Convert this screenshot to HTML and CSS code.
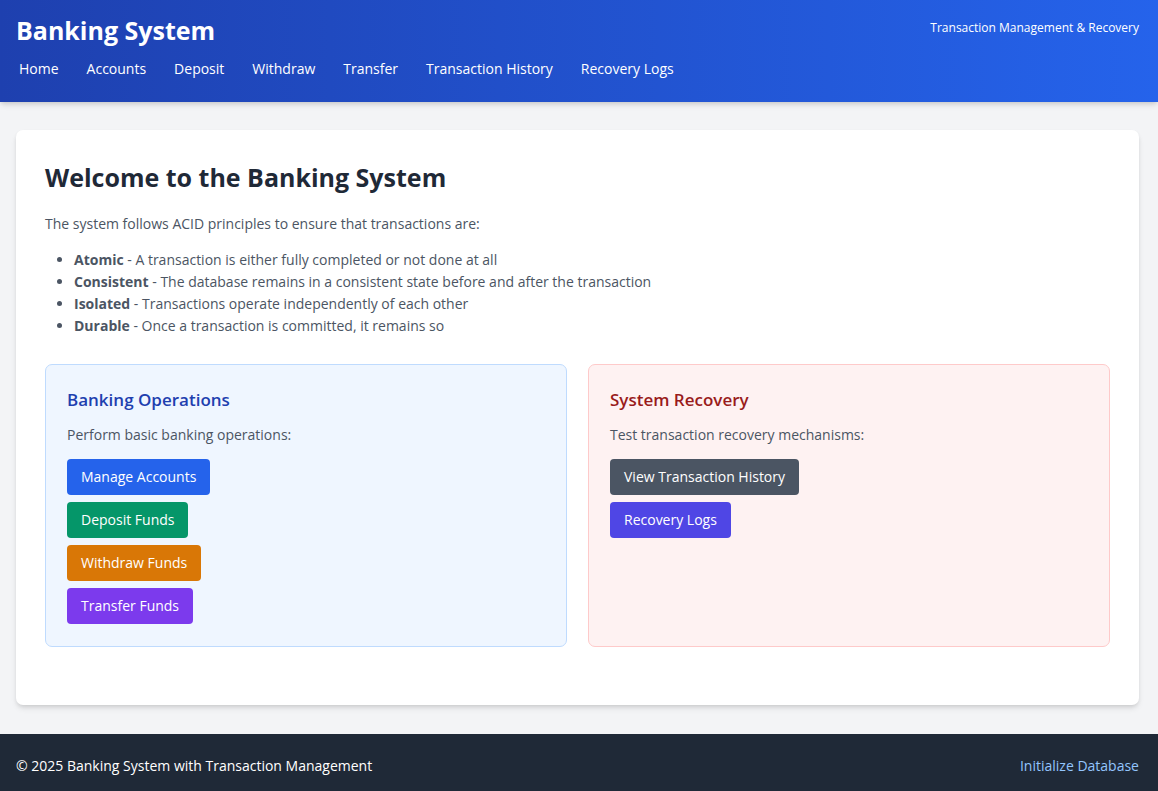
FILE: index.html
```html
<!DOCTYPE html>
<html lang="en">
<head>
<meta charset="utf-8">
<meta name="viewport" content="width=device-width, initial-scale=1">
<title>Banking System</title>
<link rel="stylesheet" href="styles.css">
</head>
<body>
<header class="site-header">
  <div class="brand-row">
    <h1 class="brand">Banking System</h1>
    <p class="tagline">Transaction Management &amp; Recovery</p>
  </div>
  <nav class="nav" aria-label="Main">
    <a href="#">Home</a>
    <a href="#">Accounts</a>
    <a href="#">Deposit</a>
    <a href="#">Withdraw</a>
    <a href="#">Transfer</a>
    <a href="#">Transaction History</a>
    <a href="#">Recovery Logs</a>
  </nav>
</header>
<main class="main">
  <section class="card">
    <h2 class="card-title">Welcome to the Banking System</h2>
    <p class="intro">The system follows ACID principles to ensure that transactions are:</p>
    <ul class="principles">
      <li><strong>Atomic</strong> - A transaction is either fully completed or not done at all</li>
      <li><strong>Consistent</strong> - The database remains in a consistent state before and after the transaction</li>
      <li><strong>Isolated</strong> - Transactions operate independently of each other</li>
      <li><strong>Durable</strong> - Once a transaction is committed, it remains so</li>
    </ul>
    <div class="panels">
      <section class="panel panel-blue">
        <h3 class="panel-title">Banking Operations</h3>
        <p class="panel-text">Perform basic banking operations:</p>
        <div class="actions">
          <a class="btn btn-blue" href="#">Manage Accounts</a>
          <a class="btn btn-green" href="#">Deposit Funds</a>
          <a class="btn btn-amber" href="#">Withdraw Funds</a>
          <a class="btn btn-violet" href="#">Transfer Funds</a>
        </div>
      </section>
      <section class="panel panel-red">
        <h3 class="panel-title">System Recovery</h3>
        <p class="panel-text">Test transaction recovery mechanisms:</p>
        <div class="actions">
          <a class="btn btn-gray" href="#">View Transaction History</a>
          <a class="btn btn-indigo" href="#">Recovery Logs</a>
        </div>
      </section>
    </div>
  </section>
</main>
<footer class="site-footer">
  <p class="copyright">© 2025 Banking System with Transaction Management</p>
  <a class="footer-link" href="#">Initialize Database</a>
</footer>
</body>
</html>
```
FILE: styles.css
```css
* {
  box-sizing: border-box;
  margin: 0;
  padding: 0;
}

body {
  min-height: 100vh;
  display: flex;
  flex-direction: column;
  background: #f3f4f6;
  color: #4b5563;
  font-family: "Segoe UI", "Open Sans", "Noto Sans", sans-serif;
  font-size: 14px;
  line-height: 22px;
}

a {
  text-decoration: none;
}

.site-header {
  padding: 14px 19px 18px 16px;
  background: linear-gradient(to right, #1e40af, #2563eb);
  color: #fff;
  box-shadow: 0 4px 6px -1px rgba(0, 0, 0, 0.1), 0 2px 4px -1px rgba(0, 0, 0, 0.1);
}

.brand-row {
  display: flex;
  justify-content: space-between;
  align-items: flex-start;
  margin-bottom: 9px;
}

.brand {
  font-size: 25px;
  line-height: 32px;
}

.tagline {
  font-size: 12px;
  line-height: 28px;
}

.nav {
  display: flex;
  flex-wrap: wrap;
  gap: 22px;
}

.nav a {
  padding: 3px 3px 4px;
  color: #fff;
}

.main {
  flex: 1;
  padding: 28px 19px 29px 16px;
}

.card {
  padding: 29px 29px 58px;
  background: #fff;
  border-radius: 7px;
  box-shadow: 0 4px 6px -1px rgba(0, 0, 0, 0.1), 0 2px 4px -1px rgba(0, 0, 0, 0.1);
}

.card-title {
  margin-bottom: 18px;
  color: #1f2937;
  font-size: 25px;
  line-height: 36px;
}

.intro {
  margin-bottom: 14px;
}

.principles {
  margin-bottom: 27px;
  padding-left: 29px;
}

.panels {
  display: grid;
  grid-template-columns: repeat(2, 1fr);
  gap: 21px;
}

.panel {
  padding: 21px 21px 22px;
  border: 1px solid;
  border-radius: 7px;
}

.panel-blue {
  background: #eff6ff;
  border-color: #bfdbfe;
}

.panel-red {
  background: #fef2f2;
  border-color: #fecaca;
}

.panel-title {
  margin-bottom: 10px;
  font-size: 17px;
  font-weight: 600;
  line-height: 28px;
}

.panel-blue .panel-title {
  color: #1e40af;
}

.panel-red .panel-title {
  color: #991b1b;
}

.panel-text {
  margin-bottom: 13px;
}

.actions {
  display: flex;
  flex-direction: column;
  align-items: flex-start;
  gap: 7px;
}

.btn {
  padding: 7px 14px;
  border-radius: 4px;
  color: #fff;
}

.btn-blue { background: #2563eb; }
.btn-green { background: #059669; }
.btn-amber { background: #d97706; }
.btn-violet { background: #7c3aed; }
.btn-gray { background: #4b5563; }
.btn-indigo { background: #4f46e5; }

.site-footer {
  display: flex;
  flex-wrap: wrap;
  justify-content: space-between;
  gap: 14px;
  padding: 21px 19px 14px 16px;
  background: #1f2937;
  color: #fff;
}

.footer-link {
  color: #93c5fd;
}
```
